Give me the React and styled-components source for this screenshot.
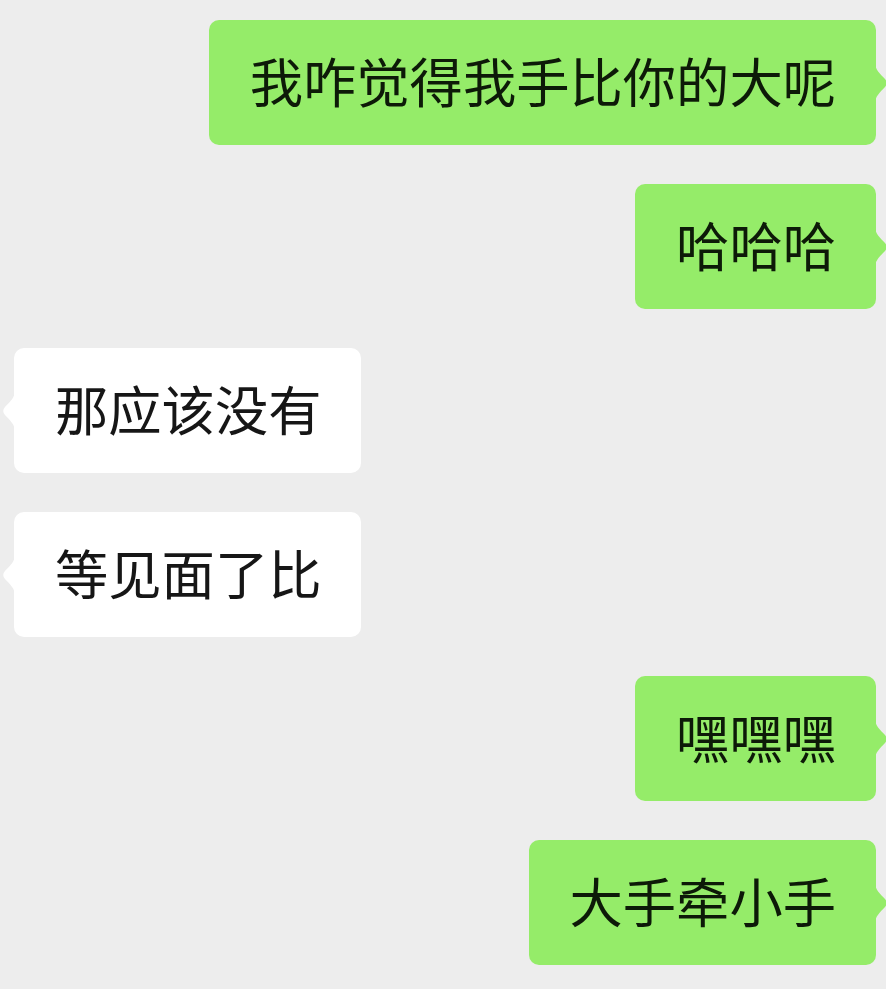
import React from "react";
import styled, { createGlobalStyle } from "styled-components";

const GlobalStyle = createGlobalStyle`
  html, body {
    margin: 0;
    padding: 0;
    background: #ededed;
  }
  body {
    font-family: "Noto Sans CJK SC", "Noto Sans", sans-serif;
    overflow: hidden;
  }
`;

const Chat = styled.div`
  width: 886px;
  height: 989px;
  box-sizing: border-box;
  padding: 20px 10px 0 14px;
  display: flex;
  flex-direction: column;
  gap: 39px;
  overflow: hidden;
`;

const Row = styled.div`
  display: flex;
  justify-content: ${(p) => (p.$mine ? "flex-end" : "flex-start")};
`;

const Bubble = styled.div`
  position: relative;
  box-sizing: border-box;
  height: 125px;
  padding: 0 40px 5px 41px;
  display: flex;
  align-items: center;
  border-radius: 10px;
  background: ${(p) => (p.$mine ? "#95ec69" : "#ffffff")};
  color: ${(p) => (p.$mine ? "#0d1a08" : "#161616")};
  font-size: 53.3px;
  font-weight: 400;
  line-height: 1;
  white-space: nowrap;
`;

const Tail = styled.svg`
  position: absolute;
  top: 50%;
  width: 14px;
  height: 40px;
  margin-top: -20px;
  ${(p) => (p.$mine ? "right: -13px; transform: scaleX(-1);" : "left: -13px;")}
  fill: ${(p) => (p.$mine ? "#95ec69" : "#ffffff")};
`;

const messages = [
  { mine: true, text: "我咋觉得我手比你的大呢" },
  { mine: true, text: "哈哈哈" },
  { mine: false, text: "那应该没有" },
  { mine: false, text: "等见面了比" },
  { mine: true, text: "嘿嘿嘿" },
  { mine: true, text: "大手牵小手" },
];

const Message = ({ mine, text }) => (
  <Row $mine={mine}>
    <Bubble $mine={mine}>
      <Tail $mine={mine} viewBox="0 0 14 40">
        <path d="M14 0 C14 6 9 11 4 16 Q0.5 20 4 24 C9 29 14 34 14 40 Z" />
      </Tail>
      {text}
    </Bubble>
  </Row>
);

export default function App() {
  return (
    <>
      <GlobalStyle />
      <Chat>
        {messages.map((m, i) => (
          <Message key={i} {...m} />
        ))}
      </Chat>
    </>
  );
}
